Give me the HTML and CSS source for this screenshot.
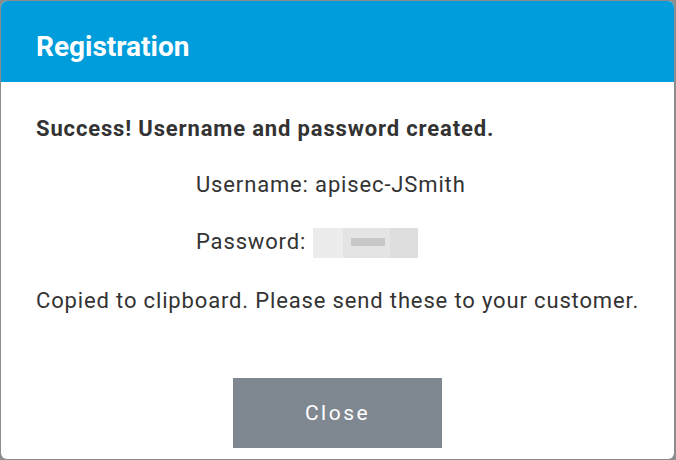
FILE: index.html
```html
<!DOCTYPE html>
<html>
<head>
    <meta charset="utf-8">
    <title>Registration</title>
    <link rel="stylesheet" href="styles.css">
</head>
<body>
    <div class="dialog">
        <div class="dialog-header">
            <h1>Registration</h1>
        </div>
        <div class="dialog-body">
            <p class="success">Success! Username and password created.</p>
            <div class="credentials">
                <p>Username: apisec-JSmith</p>
                <p>Password: <span class="blurred"><span class="blur-a"></span><span class="blur-b"></span><span class="blur-c"></span></span></p>
            </div>
            <p>Copied to clipboard. Please send these to your customer.</p>
        </div>
        <div class="dialog-footer">
            <button class="close-button">Close</button>
        </div>
    </div>
</body>
</html>
```

FILE: styles.css
```css
html, body {
    margin: 0;
    height: 100%;
}
body {
    background-color: #8c8c8c;
    font-family: Roboto, "Liberation Sans", sans-serif;
    padding: 1px 2px 1px 1px;
    box-sizing: border-box;
}
.dialog {
    height: 100%;
    background-color: #fff;
    border-radius: 6px;
    overflow: hidden;
    display: flex;
    flex-direction: column;
}
.dialog-header {
    background-color: #009ddc;
    height: 81px;
    display: flex;
    align-items: center;
    padding-left: 35px;
}
.dialog-header h1 {
    margin: 0;
    color: #fff;
    font-size: 28px;
    font-weight: bold;
    line-height: 32px;
    padding-top: 11px;
}
.dialog-body {
    padding: 34px 20px 0 35px;
    color: #333;
    font-size: 22px;
    letter-spacing: 0.85px;
    white-space: nowrap;
}
.dialog-body p {
    margin: 0 0 30px;
    line-height: 26px;
}
.success {
    font-weight: bold;
}
.credentials {
    padding-left: 160px;
}
.blurred {
    display: inline-block;
    vertical-align: middle;
    width: 105px;
    height: 30px;
    background-color: #e4e4e4;
    position: relative;
    margin-left: 1px;
}
.blur-a {
    position: absolute;
    left: 0;
    top: 0;
    width: 30px;
    height: 30px;
    background-color: #ececec;
}
.blur-b {
    position: absolute;
    left: 38px;
    top: 10px;
    width: 34px;
    height: 8px;
    background-color: #c8c8c8;
}
.blur-c {
    position: absolute;
    right: 0;
    top: 0;
    width: 28px;
    height: 30px;
    background-color: #dedede;
}
.dialog-footer {
    display: flex;
    justify-content: center;
    margin-top: auto;
    padding-bottom: 11px;
}
.close-button {
    width: 209px;
    height: 70px;
    background-color: #7f8790;
    color: #fff;
    border: none;
    font-family: Roboto, "Liberation Sans", sans-serif;
    font-size: 21px;
    letter-spacing: 2.5px;
    cursor: pointer;
}
```
